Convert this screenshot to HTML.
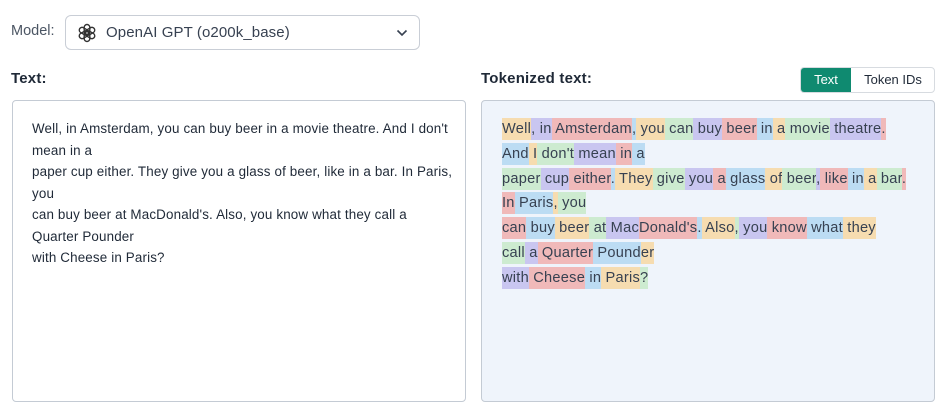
<!DOCTYPE html>
<html><head><meta charset="utf-8"><style>
*{box-sizing:border-box;margin:0;padding:0}
body{width:952px;height:415px;background:#fff;font-family:"Liberation Sans",sans-serif;color:#1f2937;position:relative;overflow:hidden}
.abs{position:absolute}
.model{left:11px;top:23px;font-size:14.5px;color:#4b5563}
.sel{left:65px;top:15px;width:355px;height:35px;border:1px solid #c9ced6;border-radius:6px}
.sel span{position:absolute;left:40px;top:8px;font-size:15px;color:#374151;letter-spacing:0.1px}
.lbl{top:70px;font-size:15px;font-weight:bold;color:#1f2937;letter-spacing:0.2px}
.box{top:100px;height:302px;border:1px solid #c4cbd4;border-radius:4px}
.lt{left:32px;top:118px;font-size:13.4px;line-height:21.5px;color:#1f2937;width:425px;letter-spacing:0.15px;white-space:nowrap}
.rt{left:502px;top:117px;font-size:14.6px;line-height:24.8px;color:#374151;width:430px;letter-spacing:0.25px;white-space:nowrap}
.rt span{padding:3px 0}
.o{background:#f6dcb0}.p{background:#c9c6f0}.r{background:#f0b9b9}.b{background:#bcdcf3}.g{background:#cdebd0}
.tog{left:800px;top:67px;width:135px;height:26px;border:1px solid #d7dbe0;border-radius:4px;overflow:hidden;font-size:13px}
.tog .a{position:absolute;left:0;top:0;width:50px;height:24px;background:#0f8a70;color:#fff;text-align:center;line-height:24px}
.tog .c{position:absolute;left:50px;top:0;width:84px;height:24px;color:#1f2937;text-align:center;line-height:24px}
</style></head><body>
<div class="abs model">Model:</div>
<div class="abs sel">
<svg style="position:absolute;left:11px;top:7px" width="20" height="20" viewBox="0 0 20 20" fill="none" stroke="#333" stroke-width="1.4"><g transform="translate(10 10)"><rect x="-2.8" y="-8.5" width="5.6" height="10" rx="2.8"/><rect x="-2.8" y="-8.5" width="5.6" height="10" rx="2.8" transform="rotate(60)"/><rect x="-2.8" y="-8.5" width="5.6" height="10" rx="2.8" transform="rotate(120)"/><rect x="-2.8" y="-8.5" width="5.6" height="10" rx="2.8" transform="rotate(180)"/><rect x="-2.8" y="-8.5" width="5.6" height="10" rx="2.8" transform="rotate(240)"/><rect x="-2.8" y="-8.5" width="5.6" height="10" rx="2.8" transform="rotate(300)"/></g></svg>
<span>OpenAI GPT (o200k_base)</span>
<svg style="position:absolute;left:330px;top:13px" width="12" height="8" viewBox="0 0 12 8"><path d="M1.5 1.5L6 6l4.5-4.5" stroke="#374151" stroke-width="1.6" fill="none"/></svg>
</div>
<div class="abs lbl" style="left:11px">Text:</div>
<div class="abs lbl" style="left:481px">Tokenized text:</div>
<div class="abs tog"><div class="a">Text</div><div class="c">Token IDs</div></div>
<div class="abs box" style="left:12px;width:454px;background:#fff"></div>
<div class="abs box" style="left:481px;width:454px;background:#eff4fb"></div>
<div class="abs lt">Well, in Amsterdam, you can buy beer in a movie theatre. And I don't<br>mean in a<br>paper cup either. They give you a glass of beer, like in a bar. In Paris,<br>you<br>can buy beer at MacDonald's. Also, you know what they call a<br>Quarter Pounder<br>with Cheese in Paris?</div>
<div class="abs rt"><span class="o">Well</span><span class="p">, in</span><span class="r"> Amsterdam</span><span class="b">,</span><span class="o"> you</span><span class="g"> can</span><span class="p"> buy</span><span class="r"> beer</span><span class="b"> in</span><span class="o"> a</span><span class="g"> movie</span><span class="p"> theatre</span><span class="r">.</span><span class="b"> </span><br><span class="b">And</span><span class="o"> I</span><span class="g"> don't</span><span class="p"> mean</span><span class="r"> in</span><span class="b"> a</span><br><span class="g">paper</span><span class="p"> cup</span><span class="r"> either</span><span class="b">.</span><span class="o"> They</span><span class="g"> give</span><span class="p"> you</span><span class="r"> a</span><span class="b"> glass</span><span class="o"> of</span><span class="g"> beer</span><span class="p">,</span><span class="r"> like</span><span class="b"> in</span><span class="o"> a</span><span class="g"> bar</span><span class="r">.</span><br><span class="r">In</span><span class="b"> Paris</span><span class="o">,</span><span class="g"> you</span><br><span class="r">can</span><span class="b"> buy</span><span class="o"> beer</span><span class="g"> at</span><span class="p"> Mac</span><span class="r">Donald's</span><span class="b">.</span><span class="o"> Also</span><span class="g">,</span><span class="p"> you</span><span class="r"> know</span><span class="b"> what</span><span class="o"> they</span><span class="g"> </span><br><span class="g">call</span><span class="p"> a</span><span class="r"> Quarter</span><span class="b"> Pound</span><span class="o">er</span><br><span class="p">with</span><span class="r"> Cheese</span><span class="b"> in</span><span class="o"> Paris</span><span class="g">?</span></div>
</body></html>
